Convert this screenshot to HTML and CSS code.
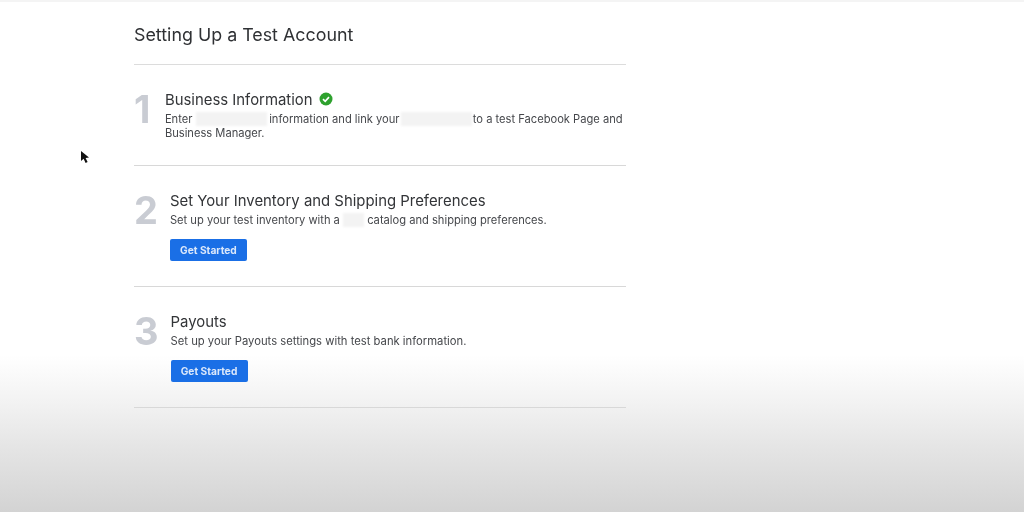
FILE: index.html
```html
<!DOCTYPE html>
<html lang="en">
<head>
<meta charset="utf-8">
<title>Setting Up a Test Account</title>
<link rel="stylesheet" href="styles.css">
</head>
<body>
<div class="topline"></div>
<svg class="cursor" width="12" height="16" viewBox="0 0 12 16"><path d="M1 1 L1 11 L3.6 8.8 L5.6 13 L7.6 12 L5.6 8 L9 7.6 Z" fill="#111"/></svg>
<main class="panel">
  <h1 class="title">Setting Up a Test Account</h1>
  <section class="step step-one">
    <div class="num">1</div>
    <div class="body">
      <h2 class="head">Business Information <svg class="check" width="14" height="14" viewBox="0 0 14 14"><circle cx="7" cy="7" r="6.5" fill="#2ea12e"/><path d="M4 7.2 L6.2 9.3 L10 5.2" fill="none" stroke="#fff" stroke-width="1.7"/></svg></h2>
      <p class="desc">Enter <span class="redact r-first"></span> information and link your <span class="redact r-second"></span> to a test Facebook Page and Business Manager.</p>
    </div>
  </section>
  <section class="step step-two">
    <div class="num">2</div>
    <div class="body">
      <h2 class="head">Set Your Inventory and Shipping Preferences</h2>
      <p class="desc">Set up your test inventory with a <span class="redact r-short"></span> catalog and shipping preferences.</p>
      <button class="btn">Get Started</button>
    </div>
  </section>
  <section class="step step-three">
    <div class="num">3</div>
    <div class="body">
      <h2 class="head">Payouts</h2>
      <p class="desc">Set up your Payouts settings with test bank information.</p>
      <button class="btn">Get Started</button>
    </div>
  </section>
</main>
</body>
</html>
```

FILE: styles.css
```css
html, body { margin: 0; height: 512px; overflow: hidden; }
body {
  position: relative;
  font-family: "Inter", "Liberation Sans", sans-serif;
  color: #3a3c40;
  background: linear-gradient(to bottom, #fff 0, #fff 355px, #f3f3f3 400px, #e4e4e4 450px, #d3d3d3 512px);
}
.topline { height: 2px; background: #f4f4f4; }
.cursor { position: absolute; left: 80px; top: 150px; filter: blur(0.5px); }
.panel { width: 492px; margin-left: 134px; filter: blur(0.35px); }
.title {
  margin: 0;
  height: 63px;
  box-sizing: border-box;
  padding-top: 22px;
  font-size: 17.85px;
  line-height: 22px;
  font-weight: 400;
  color: #2f3134;
  border-bottom: 1px solid #dcdcdc;
}
.step {
  display: flex;
  gap: 12px;
  height: 121px;
  box-sizing: border-box;
  padding-top: 26px;
  border-bottom: 1px solid #d8d8d8;
}
.step-one { height: 101px; gap: 14.5px; }
.step-two { height: 120.5px; padding-top: 25.5px; }
.num {
  font-size: 38px;
  line-height: 36px;
  font-weight: 700;
  color: #c9ccd3;
}
.body { flex: 1; }
.head {
  margin: 0;
  font-size: 14.9px;
  line-height: 18px;
  font-weight: 400;
  color: #333538;
}
.check { vertical-align: -1px; margin-left: 2px; }
.desc {
  margin: 3px 0 0;
  font-size: 11.15px;
  line-height: 14px;
  color: #45474b;
}
.step-three .desc { font-size: 11.25px; }
.redact {
  display: inline-block;
  height: 14px;
  vertical-align: -3px;
  background: #f3f3f3;
  filter: blur(1px);
}
.r-first { width: 71px; margin: 0 -1px 0 0.5px; }
.r-second { width: 71px; margin: 0 -2px 0 -2px; }
.r-short { width: 21px; }
.btn {
  display: block;
  margin-top: 12px;
  width: 77px;
  height: 22px;
  padding: 0;
  border: 0;
  border-radius: 2px;
  background: #1a6fe6;
  color: #dbe8fb;
  font-family: inherit;
  font-size: 10.2px;
  font-weight: 700;
}
```
